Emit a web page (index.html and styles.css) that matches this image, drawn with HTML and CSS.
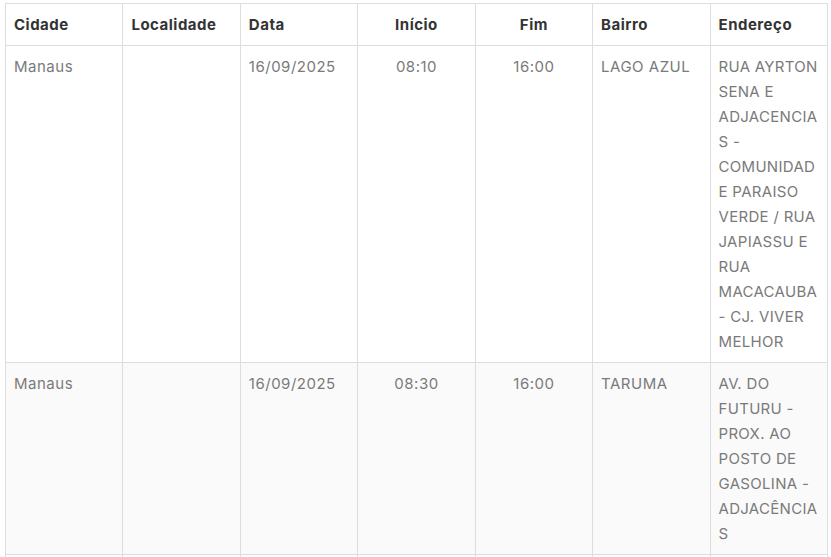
FILE: index.html
```html
<!DOCTYPE html>
<html lang="pt-BR">
<head>
<meta charset="utf-8">
<title>Tabela</title>
<link rel="stylesheet" href="styles.css">
</head>
<body>
<table class="schedule">
  <colgroup>
    <col class="c"><col class="c"><col class="c"><col class="c"><col class="c"><col class="c"><col class="c">
  </colgroup>
  <thead>
    <tr>
      <th>Cidade</th>
      <th>Localidade</th>
      <th>Data</th>
      <th class="center">Início</th>
      <th class="center">Fim</th>
      <th>Bairro</th>
      <th>Endereço</th>
    </tr>
  </thead>
  <tbody>
    <tr>
      <td>Manaus</td>
      <td></td>
      <td>16/09/2025</td>
      <td class="center">08:10</td>
      <td class="center">16:00</td>
      <td>LAGO AZUL</td>
      <td class="addr">RUA AYRTON<br>SENA E<br>ADJACENCIA<br>S -<br>COMUNIDAD<br>E PARAISO<br>VERDE / RUA<br>JAPIASSU E<br>RUA<br>MACACAUBA<br>- CJ. VIVER<br>MELHOR</td>
    </tr>
    <tr class="alt">
      <td>Manaus</td>
      <td></td>
      <td>16/09/2025</td>
      <td class="center">08:30</td>
      <td class="center">16:00</td>
      <td>TARUMA</td>
      <td class="addr">AV. DO<br>FUTURU -<br>PROX. AO<br>POSTO DE<br>GASOLINA -<br>ADJACÊNCIA<br>S</td>
    </tr>
    <tr>
      <td>&nbsp;</td><td></td><td></td><td></td><td></td><td></td><td></td>
    </tr>
  </tbody>
</table>
</body>
</html>
```

FILE: styles.css
```css
html, body {
  margin: 0;
  padding: 0;
  background: #ffffff;
}
body {
  padding: 3px 0 0 5px;
  font-family: "Inter", "DejaVu Sans", sans-serif;
  font-size: 15px;
  letter-spacing: 0.5px;
}
.schedule {
  width: 823px;
  table-layout: fixed;
  border-collapse: collapse;
  border: 1px solid #dddddd;
}
.schedule th,
.schedule td {
  border: 1px solid #dddddd;
  text-align: left;
  vertical-align: top;
  line-height: 25px;
}
.schedule th {
  padding: 8px 8px;
  color: #333333;
  font-weight: 700;
}
.schedule td {
  padding: 8px 8px;
  color: #7a7a7a;
  font-weight: 400;
}
.schedule .addr {
  white-space: nowrap;
  letter-spacing: 0.3px;
}
.schedule .center {
  text-align: center;
}
.schedule tr.alt td {
  background: #fafafa;
}
```
